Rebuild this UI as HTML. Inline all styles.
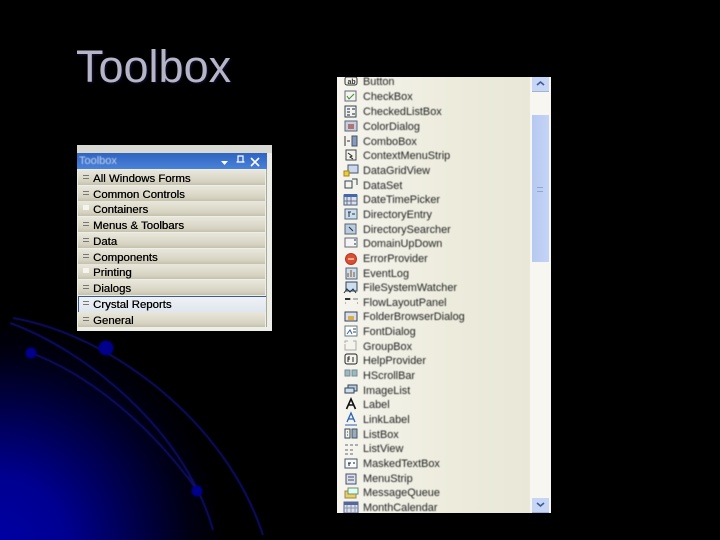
<!DOCTYPE html>
<html><head><meta charset="utf-8"><title>Toolbox</title>
<style>
html,body{margin:0;padding:0;background:#000}
#p{position:relative;width:720px;height:540px;overflow:hidden;background:#000;font-family:"Liberation Sans",sans-serif}
#bg{position:absolute;left:0;top:0}
h1{position:absolute;left:76px;top:41px;margin:0;font-weight:normal;font-size:45px;line-height:52px;color:#b5b5c6;text-shadow:1px 1px 2px #14143c}
#t{position:absolute;left:77px;top:145px;width:195px;height:186px;background:#eeeee8}
#t .top{position:absolute;left:0;top:0;width:195px;height:8px;background:#d9d9d4}
#t .bar{position:absolute;left:0;top:8px;width:190px;height:16px;background:linear-gradient(#2f64c0,#4a82d8)}
#t .bar span{position:absolute;left:2px;top:1px;font-size:11px;line-height:14px;color:#c4d4f0;filter:blur(.5px)}
#t .bar svg{position:absolute;left:140px;top:0}
#t .r{position:absolute;left:1px;width:187px;height:15px;background:linear-gradient(#e9e7dc,#d6d3c2 75%,#c4c1ae);font-size:11.4px;line-height:15px;color:#000;filter:blur(.3px)}
#t .r b{font-weight:normal;position:absolute;left:15px;top:1.500px;white-space:nowrap;text-shadow:.3px 0 0 #000}
#t .r i{position:absolute;left:5px;top:5px;width:6px;height:2px;border-top:1px solid #777;border-bottom:1px solid #777}
#t .r i.w{height:5px;top:4px;border:0;background:#f5f5ee}
#t .s{background:linear-gradient(#eef1f4,#dfe6ee);border-top:1px solid #3a5a90;border-left:1px solid #3a5a90;margin-top:-1px;height:15px}
#t .s b{left:14px;top:.5px}
#t .s i{left:4px;top:4px}
#t .e{position:absolute;left:189px;top:24px;width:1px;height:158px;background:#a9a796}
#l{position:absolute;left:337px;top:77px;width:193px;height:436px;overflow:hidden;background:linear-gradient(90deg,#f6f5ee,#ecebdc 60%,#e9e8d8)}
#l div{position:absolute;left:26px;font-size:10.9px;line-height:14px;color:#222;white-space:nowrap;filter:blur(.5px);margin-top:1px}
#sb{position:absolute;left:530px;top:77px;width:21px;height:436px;background:#f7f6f1}
#sb .th{position:absolute;left:2px;top:38px;width:17px;height:147px;background:linear-gradient(90deg,#b6c9f0,#c4d4f6)}
#sb .th:after{content:"";position:absolute;left:5px;top:72px;width:6px;height:3px;border-top:1px solid #8ea6d6;border-bottom:1px solid #8ea6d6}
#sb .b{position:absolute;left:2px;width:17px;height:14px;background:#c8d6f6;border-bottom:1px solid #9fb2d8}
#ic{position:absolute;left:337px;top:77px}
</style></head><body><div id="p">
<svg id="bg" width="720" height="540" viewBox="0 0 720 540">
<defs>
<radialGradient id="g" gradientUnits="userSpaceOnUse" cx="0" cy="545" r="225">
<stop offset="0" stop-color="#0000a4"/><stop offset=".3" stop-color="#000090"/><stop offset=".6" stop-color="#00004c"/><stop offset=".85" stop-color="#000012"/><stop offset="1" stop-color="#000"/>
</radialGradient>
<filter id="b"><feGaussianBlur stdDeviation=".7"/></filter>
</defs>
<rect width="720" height="540" fill="#000"/>
<rect x="0" y="300" width="240" height="240" fill="url(#g)"/>
<g fill="none" stroke="#0b0b68" stroke-width="2" filter="url(#b)">
<path d="M13 318C110 335 225 420 263 535"/>
<path d="M10 323C85 350 185 430 213 530"/>
<path d="M31 353C90 375 150 425 197 490"/>
</g>
<g fill="#05058c" filter="url(#b)">
<circle cx="106" cy="348" r="7.500"/><circle cx="31" cy="353" r="5.500"/><circle cx="197" cy="491" r="5.500"/>
</g>
</svg>
<h1>Toolbox</h1>
<div id="t">
<div class="top"></div>
<div class="bar"><span>Toolbox</span>
<svg width="50" height="16"><path d="M4 8h7l-3.500 4z" fill="#fff"/><path d="M21 3h5v6h-5zM19.500 9h8" fill="none" stroke="#fff" stroke-width="1.200"/><path d="M34 5l8 8M42 5l-8 8" stroke="#fff" stroke-width="1.600"/></svg></div>
<div class="r" style="top:25px"><i></i><b>All Windows Forms</b></div>
<div class="r" style="top:41px"><i></i><b>Common Controls</b></div>
<div class="r" style="top:56px"><i class="w"></i><b>Containers</b></div>
<div class="r" style="top:72px"><i></i><b>Menus &amp; Toolbars</b></div>
<div class="r" style="top:88px"><i></i><b>Data</b></div>
<div class="r" style="top:104px"><i></i><b>Components</b></div>
<div class="r" style="top:119px"><i class="w"></i><b>Printing</b></div>
<div class="r" style="top:135px"><i></i><b>Dialogs</b></div>
<div class="r s" style="top:152px"><i></i><b>Crystal Reports</b></div>
<div class="r" style="top:167px"><i></i><b>General</b></div>
<div class="e"></div>
</div>
<div id="l">
<div style="top:-3px">Button</div>
<div style="top:12px">CheckBox</div>
<div style="top:27px">CheckedListBox</div>
<div style="top:42px">ColorDialog</div>
<div style="top:57px">ComboBox</div>
<div style="top:71px">ContextMenuStrip</div>
<div style="top:86px">DataGridView</div>
<div style="top:101px">DataSet</div>
<div style="top:115px">DateTimePicker</div>
<div style="top:130px">DirectoryEntry</div>
<div style="top:145px">DirectorySearcher</div>
<div style="top:159px">DomainUpDown</div>
<div style="top:174px">ErrorProvider</div>
<div style="top:189px">EventLog</div>
<div style="top:203px">FileSystemWatcher</div>
<div style="top:218px">FlowLayoutPanel</div>
<div style="top:232px">FolderBrowserDialog</div>
<div style="top:247px">FontDialog</div>
<div style="top:262px">GroupBox</div>
<div style="top:276px">HelpProvider</div>
<div style="top:291px">HScrollBar</div>
<div style="top:306px">ImageList</div>
<div style="top:320px">Label</div>
<div style="top:335px">LinkLabel</div>
<div style="top:350px">ListBox</div>
<div style="top:364px">ListView</div>
<div style="top:379px">MaskedTextBox</div>
<div style="top:394px">MenuStrip</div>
<div style="top:408px">MessageQueue</div>
<div style="top:423px">MonthCalendar</div>
</div>
<svg id="ic" width="26" height="436" viewBox="0 0 26 436">
<g fill="none" stroke="#555" stroke-width="1">
<rect x="8" y="0" width="12" height="8" rx="2" stroke="#333"/>
<rect x="8" y="14" width="11" height="10" stroke="#667"/><path d="M10 19l2 3 5-5" stroke="#3a8a3a"/>
<rect x="8" y="29" width="11" height="11" stroke="#345"/><path d="M10 32h3M10 35h3M10 38h3M15 32h3M15 37h3" stroke="#124"/>
<rect x="8" y="44" width="12" height="10" fill="#ccd" stroke="#567"/><rect x="11" y="47" width="6" height="5" fill="#a77" stroke="none"/>
<path d="M8 59v10M10 64h3" stroke="#333"/><rect x="15" y="59" width="5" height="10" fill="#89b" stroke="#456"/>
<rect x="9" y="73" width="10" height="10" stroke="#444"/><path d="M11 76l4 3-2 1 3 2" stroke="#222"/>
<rect x="11" y="88" width="10" height="8" fill="#cdd7ea" stroke="#457"/><rect x="7" y="94" width="5" height="5" fill="#e8cc50" stroke="#a80"/>
<rect x="8" y="104" width="7" height="7" stroke="#345"/><path d="M15 102h5v6" stroke="#345"/>
<rect x="7" y="118" width="13" height="10" fill="#dde" stroke="#467"/><rect x="7" y="117" width="13" height="3" fill="#46a" stroke="none"/><path d="M10 120v8M14 120v8M7 124h13" stroke="#678"/>
<rect x="8" y="132" width="12" height="10" fill="#cde" stroke="#567"/><path d="M11 135h3M12 135v5M15 137h3" stroke="#234"/>
<rect x="8" y="147" width="11" height="10" fill="#bcd" stroke="#567"/><path d="M12 150l4 4" stroke="#234"/>
<rect x="8" y="161" width="12" height="9" fill="#f4f4f4" stroke="#667"/><path d="M17 163h2M17 167h2" stroke="#234"/>
<circle cx="14" cy="182" r="5.500" fill="#d8502c" stroke="#b33"/><path d="M11 182h6" stroke="#fff"/>
<rect x="9" y="191" width="11" height="11" fill="#cde" stroke="#567"/><path d="M11 200v-4M14 200v-7M17 200v-5" stroke="#852"/>
<rect x="9" y="205" width="11" height="9" fill="#cde" stroke="#345"/><path d="M7 216l3-4 3 3 3-3 3 4" stroke="#234"/>
<path d="M8 222h6M16 222h5M8 226h1M20 226h1" stroke="#777"/><rect x="8" y="221" width="5" height="2" fill="#333" stroke="none"/>
<rect x="8" y="235" width="12" height="9" fill="#dde" stroke="#345"/><rect x="11" y="239" width="6" height="4" fill="#d8b048" stroke="none"/>
<rect x="8" y="249" width="12" height="10" fill="#fff" stroke="#678"/><path d="M10 257l3-4 2 4" stroke="#36a"/><path d="M16 252h3M16 255h3" stroke="#345"/>
<path d="M8 266v-2h3M16 264h3v9h-11v-6" stroke="#aaa"/>
<rect x="8" y="277" width="12" height="10" rx="2" stroke="#222"/><path d="M11 280v5M11 280h2M11 282h2M16 280v5" stroke="#222"/>
<rect x="8" y="293" width="5" height="6" fill="#9bb" stroke="#789"/><rect x="15" y="293" width="5" height="6" fill="#9bb" stroke="#789"/>
<rect x="11" y="308" width="9" height="6" fill="#bcd" stroke="#345"/><rect x="8" y="311" width="9" height="5" fill="#cde" stroke="#345"/>
<path d="M9.500 332l4.500-10 4.500 10M11.500 328h5" stroke="#111" stroke-width="1.600"/>
<path d="M10 345l4-9 4 9M11.500 342h5" stroke="#2a62b8" stroke-width="1.300"/><path d="M8 348h12" stroke="#2a62b8"/>
<path d="M8 352h5v9h-5zM10 355h1M10 358h1" stroke="#345"/><rect x="15" y="352" width="5" height="9" fill="#9ab" stroke="#456"/>
<path d="M8 368h3M13 368h3M18 368h3M8 373h3M13 373h3M8 377h3M13 377h3" stroke="#667"/>
<rect x="8" y="382" width="12" height="9" fill="#fafafa" stroke="#456"/><path d="M11 386h3M12 386v3M16 386h2" stroke="#123"/>
<path d="M9 397h10v10h-10zM11 400h6M11 403h6" fill="#dde" stroke="#456"/>
<rect x="8" y="414" width="11" height="7" fill="#e8d060" stroke="#985"/><rect x="11" y="411" width="10" height="6" fill="#dfe" stroke="#787"/>
<rect x="7" y="425" width="14" height="11" fill="#dde" stroke="#569"/><rect x="7" y="425" width="14" height="3" fill="#569" stroke="none"/><path d="M10 428v8M14 428v8M18 428v8M7 431h14" stroke="#89a"/>
</g>
<text x="10.500" y="7" font-family="Liberation Sans,sans-serif" font-size="7" font-weight="bold" fill="#333">ab</text>
</svg>
<div id="sb">
<div class="b" style="top:0"><svg width="17" height="14"><path d="M5 8l3.500-3 3.500 3" fill="none" stroke="#3c5a96" stroke-width="1.600"/></svg></div>
<div class="th"></div>
<div class="b" style="top:421px"><svg width="17" height="14"><path d="M5 5l3.500 3 3.500-3" fill="none" stroke="#3c5a96" stroke-width="1.600"/></svg></div>
</div>
</div></body></html>
